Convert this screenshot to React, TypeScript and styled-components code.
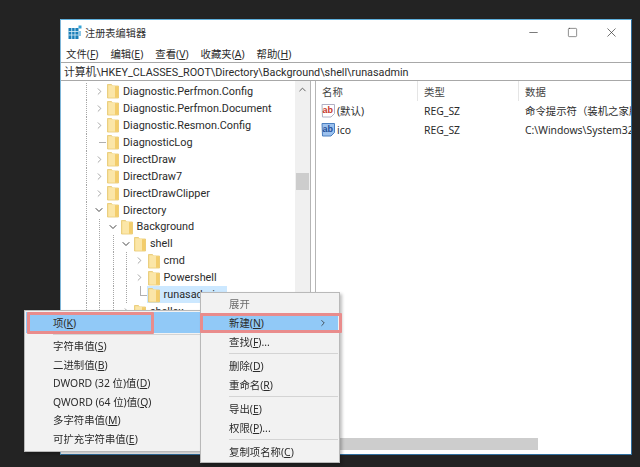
import React from 'react'
import styled, { createGlobalStyle } from 'styled-components'
import { ChevronRight, ChevronDown, ChevronUp, Minus, Square, X } from 'lucide-react'

const GlobalStyle = createGlobalStyle`
    html, body {
        margin: 0;
        height: 467px;
        overflow: hidden;
        background: #232323;
        font-family: "Noto Sans", "Noto Sans CJK SC", sans-serif;
        color: #2b2b2b;
    }
`

const Desktop = styled.div`
    position: relative;
    width: 640px;
    height: 467px;
    padding: 19px 8px 12px 60px;
    box-sizing: border-box;
    filter: blur(0.3px);
`

const Window = styled.div`
    display: flex;
    flex-direction: column;
    height: 100%;
    background: #fff;
    border: 1px solid #2f6f9f;
    border-top-color: #5fb0dc;
    border-left-color: #7fb6d8;
    box-sizing: border-box;
    overflow: hidden;
`

const TitleBar = styled.div`
    display: flex;
    align-items: center;
    height: 24px;
    flex: none;
    padding-left: 7px;
    font-size: 10.2px;
    color: #333;
`

const TitleText = styled.span`
    margin-left: 3px;
    flex: 1;
`

const Controls = styled.div`
    display: flex;
    align-items: center;
    color: #333;
`

const Control = styled.span`
    display: flex;
    justify-content: center;
    width: 39px;
`

const MenuBar = styled.div`
    display: flex;
    gap: 12px;
    height: 18px;
    flex: none;
    align-items: center;
    padding-left: 5px;
    font-size: 10.4px;
`

const AddressBar = styled.div`
    height: 19px;
    flex: none;
    display: flex;
    align-items: center;
    padding: 0 0 1px 3px;
    box-sizing: border-box;
    border-top: 1px solid #a8a8a8;
    border-bottom: 1px solid #a8a8a8;
    font-family: Roboto, "Noto Sans CJK SC", sans-serif;
    font-size: 10.8px;
    white-space: nowrap;
`

const Panes = styled.div`
    flex: 1;
    display: flex;
    min-height: 0;
    padding-bottom: 4px;
`

const TreePane = styled.div`
    width: 250px;
    flex: none;
    display: flex;
    border-right: 1px solid #b5b5b5;
    box-sizing: border-box;
    overflow: hidden;
`

const Tree = styled.div`
    flex: 1;
    min-width: 0;
    padding-top: 2px;
`

const Scrollbar = styled.div`
    width: 15px;
    flex: none;
    display: flex;
    flex-direction: column;
    align-items: center;
    background: #f0f0f0;
    padding-top: 3px;
    color: #555;
`

const Thumb = styled.div`
    width: 13px;
    height: 17px;
    margin-top: 78px;
    background: #cdcdcd;
`

const Row = styled.div`
    display: flex;
    align-items: stretch;
    height: 16.95px;
    padding-left: 18px;
    font-family: Roboto, sans-serif;
    font-size: 10.85px;
    white-space: nowrap;
`

const Guide = styled.span`
    width: 13.5px;
    flex: none;
    background: repeating-linear-gradient(to bottom, #a6a6a6 0 1px, transparent 1px 2px) 6.5px 0 / 1px 100% no-repeat;
`

const Toggle = styled.span<{ $leaf?: 'tick' | 'end' }>`
    width: 13.5px;
    flex: none;
    display: flex;
    align-items: center;
    justify-content: center;
    color: #777;
    background:
        ${p => (p.$leaf ? 'linear-gradient(#b0b0b0, #b0b0b0) 6.5px 8.5px / 7px 1px no-repeat' : 'none')}
        ${p => (p.$leaf === 'end' ? ', linear-gradient(#b0b0b0, #b0b0b0) 6.5px 0 / 1px 9px no-repeat' : '')};
`

const Label = styled.span<{ $selected?: boolean }>`
    display: flex;
    align-items: center;
    padding: 0 6px 0 1px;
    background: ${p => (p.$selected ? '#cce8ff' : 'transparent')};
`

const ItemName = styled.span`
    margin-left: 4px;
`

const ListPane = styled.div`
    flex: 1;
    min-width: 0;
    display: flex;
    flex-direction: column;
    margin-left: 4px;
    border-left: 1px solid #b5b5b5;
    overflow: hidden;
`

const ListBody = styled.div`
    flex: 1;
    font-size: 10.4px;
`

const ListGrid = styled.div<{ $header?: boolean }>`
    display: grid;
    grid-template-columns: 102px 101px 1fr;
    height: ${p => (p.$header ? '20px' : '19px')};
    align-items: center;
    white-space: nowrap;
    color: ${p => (p.$header ? '#444' : 'inherit')};
`

const Cell = styled.span<{ $header?: boolean }>`
    display: flex;
    align-items: center;
    height: 100%;
    padding-left: 6px;
    overflow: hidden;
    box-sizing: border-box;
    border-right: ${p => (p.$header ? '1px solid #e5e5e5' : 'none')};
`

const HScroll = styled.div`
    height: 12px;
    flex: none;
    width: 222px;
    background: #cdcdcd;
`

const Menu = styled.div<{ $left: number; $top: number; $width: number; $height: number; $front?: boolean }>`
    position: absolute;
    left: ${p => p.$left}px;
    top: ${p => p.$top}px;
    width: ${p => p.$width}px;
    height: ${p => p.$height}px;
    box-sizing: border-box;
    z-index: ${p => (p.$front ? 2 : 1)};
    background: #f2f2f2;
    border: 1px solid #b9b9b9;
    box-shadow: 2px 2px 3px rgba(0, 0, 0, 0.25);
    padding: 1px 1px;
    font-size: 10.4px;
    color: #2b2b2b;
`

const MenuItem = styled.div<{ $active?: boolean; $pad: number; $height: number; $disabled?: boolean }>`
    position: relative;
    display: flex;
    align-items: center;
    justify-content: space-between;
    height: ${p => p.$height}px;
    padding: 0 10px 0 ${p => p.$pad}px;
    background: ${p => (p.$active ? '#91c9f7' : 'transparent')};
    color: ${p => (p.$disabled ? '#6d6d6d' : 'inherit')};
    white-space: nowrap;
`

const Callout = styled.span<{ $left: number; $width: number }>`
    position: absolute;
    left: ${p => p.$left}px;
    top: 0;
    bottom: -1px;
    width: ${p => p.$width}px;
    box-sizing: border-box;
    border: 3px solid #e98c8c;
    border-radius: 1px;
    pointer-events: none;
`

const Separator = styled.div<{ $height: number }>`
    height: ${p => p.$height}px;
    display: flex;
    align-items: center;
    margin-left: 27px;
    &::after {
        content: '';
        flex: 1;
        height: 1px;
        background: #d4d4d4;
    }
`

const RegIcon = ({ color, text }: { color: string; text: string }) => (
    <svg width="15" height="15" viewBox="0 0 15 15" style={{ flex: 'none', marginLeft: -1, marginRight: 1 }}>
        <path d="M1 1.5h12.5v9l-3.5 3.5h-8.5z" fill={color === 'red' ? '#fff' : '#9cc1ee'} stroke={color === 'red' ? '#b0b0c4' : '#4a7fc0'} />
        <text x="1.5" y="9.5" fontSize="9" fontWeight="700" fontFamily="'Liberation Sans', sans-serif" fill={color === 'red' ? '#c8362a' : '#1f4f9a'}>{text}</text>
    </svg>
)

const Folder = () => (
    <svg width="12" height="16" viewBox="0 0 12 16" style={{ flex: 'none' }}>
        <path d="M0.5 1.5h4l1 1.5h6v12h-11z" fill="#f8dc8c" stroke="#e6c670" strokeWidth="0.8" />
        <path d="M8 3.5h3.5v11H8z" fill="#f3cd6c" />
        <path d="M1.5 2.5h6.5v12H1.5z" fill="#fbe6a8" />
    </svg>
)

const AppIcon = () => (
    <svg width="14" height="15" viewBox="0 0 14 15" style={{ flex: 'none' }}>
        <rect x="0.5" y="3" width="10" height="11" fill="#1a7fb8" />
        <path d="M3.7 3v11M7 3v11M0.5 6.5h10M0.5 10h10" stroke="#dff1fa" strokeWidth="0.8" />
        <rect x="10.5" y="0.5" width="3" height="3" fill="#35a3d6" />
        <rect x="11" y="6" width="2" height="5" fill="#8cc7e6" />
    </svg>
)

type TreeRow = {
    name: string
    depth: number
    toggle?: 'open' | 'closed' | 'tick' | 'end'
    selected?: boolean
}

const rows: TreeRow[] = [
    { name: 'Diagnostic.Perfmon.Config', depth: 0, toggle: 'closed' },
    { name: 'Diagnostic.Perfmon.Document', depth: 0, toggle: 'closed' },
    { name: 'Diagnostic.Resmon.Config', depth: 0, toggle: 'closed' },
    { name: 'DiagnosticLog', depth: 0, toggle: 'tick' },
    { name: 'DirectDraw', depth: 0, toggle: 'closed' },
    { name: 'DirectDraw7', depth: 0, toggle: 'closed' },
    { name: 'DirectDrawClipper', depth: 0, toggle: 'closed' },
    { name: 'Directory', depth: 0, toggle: 'open' },
    { name: 'Background', depth: 1, toggle: 'open' },
    { name: 'shell', depth: 2, toggle: 'open' },
    { name: 'cmd', depth: 3, toggle: 'closed' },
    { name: 'Powershell', depth: 3, toggle: 'closed' },
    { name: 'runasadmin', depth: 3, toggle: 'end', selected: true },
    { name: 'shellex', depth: 2, toggle: 'closed' },
    { name: 'shellex', depth: 1, toggle: 'closed' },
]

const TreeItem = ({ row }: { row: TreeRow }) => (
    <Row>
        {Array.from({ length: row.depth + 1 }).map((_, i) => <Guide key={i} />)}
        <Toggle $leaf={row.toggle === 'tick' || row.toggle === 'end' ? row.toggle : undefined}>
            {row.toggle === 'closed' && <ChevronRight size={11} strokeWidth={1.6} color="#888" />}
            {row.toggle === 'open' && <ChevronDown size={12} strokeWidth={2} color="#444" />}
        </Toggle>
        <Label $selected={row.selected}>
            <Folder />
            <ItemName>{row.name}</ItemName>
        </Label>
    </Row>
)

const App = () => (
    <Desktop>
        <GlobalStyle />
        <Window>
            <TitleBar>
                <AppIcon />
                <TitleText>注册表编辑器</TitleText>
                <Controls>
                    <Control><Minus size={13} strokeWidth={1.2} /></Control>
                    <Control><Square size={11} strokeWidth={1.2} /></Control>
                    <Control><X size={15} strokeWidth={1.1} /></Control>
                </Controls>
            </TitleBar>
            <MenuBar>
                <span>文件(<u>F</u>)</span>
                <span>编辑(<u>E</u>)</span>
                <span>查看(<u>V</u>)</span>
                <span>收藏夹(<u>A</u>)</span>
                <span>帮助(<u>H</u>)</span>
            </MenuBar>
            <AddressBar>计算机\HKEY_CLASSES_ROOT\Directory\Background\shell\runasadmin</AddressBar>
            <Panes>
                <TreePane>
                    <Tree>
                        {rows.map((row, i) => <TreeItem key={i} row={row} />)}
                    </Tree>
                    <Scrollbar>
                        <ChevronUp size={11} strokeWidth={2} />
                        <Thumb />
                    </Scrollbar>
                </TreePane>
                <ListPane>
                    <ListBody>
                        <ListGrid $header>
                            <Cell $header>名称</Cell>
                            <Cell $header>类型</Cell>
                            <Cell>数据</Cell>
                        </ListGrid>
                        <ListGrid>
                            <Cell><RegIcon color="red" text="ab" />(默认)</Cell>
                            <Cell>REG_SZ</Cell>
                            <Cell>命令提示符（装机之家版）</Cell>
                        </ListGrid>
                        <ListGrid>
                            <Cell><RegIcon color="blue" text="ab" />ico</Cell>
                            <Cell>REG_SZ</Cell>
                            <Cell>C:\Windows\System32\cmd.exe</Cell>
                        </ListGrid>
                    </ListBody>
                    <HScroll />
                </ListPane>
            </Panes>
        </Window>

        <Menu $left={24} $top={310} $width={190} $height={142}>
            <MenuItem $active $pad={27} $height={21}>
                <span>项(<u>K</u>)</span>
                <Callout $left={1} $width={127} />
            </MenuItem>
            <Separator $height={3.5} />
            <MenuItem $pad={27} $height={18.5}><span>字符串值(<u>S</u>)</span></MenuItem>
            <MenuItem $pad={27} $height={18.5}><span>二进制值(<u>B</u>)</span></MenuItem>
            <MenuItem $pad={27} $height={18.5}><span>DWORD (32 位)值(<u>D</u>)</span></MenuItem>
            <MenuItem $pad={27} $height={18.5}><span>QWORD (64 位)值(<u>Q</u>)</span></MenuItem>
            <MenuItem $pad={27} $height={18.5}><span>多字符串值(<u>M</u>)</span></MenuItem>
            <MenuItem $pad={27} $height={18.5}><span>可扩充字符串值(<u>E</u>)</span></MenuItem>
        </Menu>

        <Menu $left={200} $top={292} $width={140} $height={171} $front>
            <MenuItem $disabled $pad={27} $height={19}><span>展开</span></MenuItem>
            <MenuItem $active $pad={27} $height={19}>
                <span>新建(<u>N</u>)</span>
                <ChevronRight size={10} strokeWidth={1.8} />
                <Callout $left={-2} $width={142} />
            </MenuItem>
            <MenuItem $pad={27} $height={19}><span>查找(<u>F</u>)...</span></MenuItem>
            <Separator $height={5} />
            <MenuItem $pad={27} $height={19}><span>删除(<u>D</u>)</span></MenuItem>
            <MenuItem $pad={27} $height={19}><span>重命名(<u>R</u>)</span></MenuItem>
            <Separator $height={5} />
            <MenuItem $pad={27} $height={19}><span>导出(<u>E</u>)</span></MenuItem>
            <MenuItem $pad={27} $height={19}><span>权限(<u>P</u>)...</span></MenuItem>
            <Separator $height={5} />
            <MenuItem $pad={27} $height={19}><span>复制项名称(<u>C</u>)</span></MenuItem>
        </Menu>
    </Desktop>
)

export default App
